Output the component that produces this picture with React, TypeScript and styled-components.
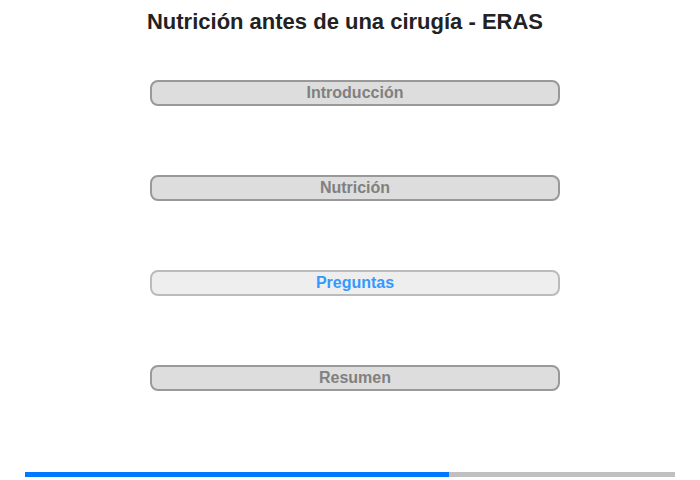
import React from "react";
import styled, { createGlobalStyle } from "styled-components";

const Global = createGlobalStyle`
  html, body { margin: 0; padding: 0; background: #fff; }
  body { font-family: "Liberation Sans", Arial, sans-serif; }
`;

const Page = styled.div`
  width: 700px;
  height: 480px;
  display: flex;
  flex-direction: column;
  align-items: center;
  box-sizing: border-box;
  padding-top: 9px;
`;

const Title = styled.h1`
  margin: 0;
  width: 100%;
  box-sizing: border-box;
  padding-right: 10px;
  text-align: center;
  font-size: 22px;
  line-height: 26px;
  font-weight: bold;
  color: #222;
`;

const Menu = styled.nav`
  margin-top: 45px;
  display: flex;
  flex-direction: column;
  gap: 69px;
  margin-left: 10px;
`;

const MenuButton = styled.div<{ $active?: boolean }>`
  width: 410px;
  height: 26px;
  box-sizing: border-box;
  border-radius: 8px;
  border: 2px solid ${(p) => (p.$active ? "#bbbbbb" : "#999999")};
  background: ${(p) => (p.$active ? "#eeeeee" : "#dddddd")};
  color: ${(p) => (p.$active ? "#3399ff" : "#808080")};
  font-size: 16px;
  font-weight: bold;
  line-height: 20px;
  display: flex;
  align-items: center;
  justify-content: center;
`;

const Progress = styled.div`
  margin-top: 81px;
  width: 650px;
  height: 5px;
  background: #c0c0c0;
  display: flex;
`;

const ProgressFill = styled.div`
  height: 100%;
  background: #0077ff;
`;

export default function App() {
  const items = [
    { label: "Introducción" },
    { label: "Nutrición" },
    { label: "Preguntas", active: true },
    { label: "Resumen" },
  ];
  const progress = 424 / 650;
  return (
    <>
      <Global />
      <Page>
        <Title>Nutrición antes de una cirugía - ERAS</Title>
        <Menu>
          {items.map((it) => (
            <MenuButton key={it.label} $active={it.active}>
              {it.label}
            </MenuButton>
          ))}
        </Menu>
        <Progress>
          <ProgressFill style={{ width: `${progress * 100}%` }} />
        </Progress>
      </Page>
    </>
  );
}
